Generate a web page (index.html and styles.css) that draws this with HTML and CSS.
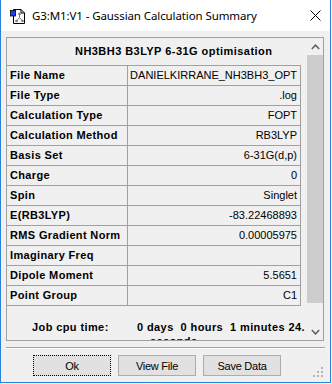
FILE: index.html
```html
<!DOCTYPE html>
<html lang="en">
<head>
    <meta charset="UTF-8">
    <meta name="viewport" content="width=device-width, initial-scale=1.0">
    <title>Gaussian Calculation Summary</title>
    <link rel="stylesheet" href="styles.css">
</head>
<body>

<div class="window">
    <div class="titlebar">
        <svg class="app-icon" width="16" height="16" viewBox="0 0 16 16">
            <path d="M3.5 1.5 H11 L14.5 5 V15.5 H3.5 Z" fill="#fff" stroke="#000" stroke-width="1"/>
            <path d="M11 1.5 V5 H14.5" fill="none" stroke="#000" stroke-width="1"/>
            <path d="M9.5 6 V9.5 M9.5 9.5 L6.5 13 M9.5 9.5 L12.5 13" stroke="#7a7a7a" stroke-width="1" fill="none"/>
            <circle cx="9.5" cy="6" r="1.3" fill="#7a7a7a"/>
            <circle cx="6.5" cy="13" r="1.3" fill="#7a7a7a"/>
            <circle cx="12.5" cy="13" r="1.3" fill="#7a7a7a"/>
            <rect x="0.5" y="2.5" width="5" height="5.5" fill="#1e3cff" stroke="#000" stroke-width="0.8"/>
        </svg>
        <span class="title">G3:M1:V1 - Gaussian Calculation Summary</span>
        <svg class="close" width="11" height="11" viewBox="0 0 11 11">
            <path d="M0.5 0.5 L10.5 10.5 M10.5 0.5 L0.5 10.5" stroke="#000" stroke-width="1"/>
        </svg>
    </div>

    <div class="client">
        <div class="panel">
            <div class="panel-body">
                <div class="heading">NH3BH3 B3LYP 6-31G optimisation</div>

                <div class="grid">
                    <div class="key">File Name</div><div class="val">DANIELKIRRANE_NH3BH3_OPT</div>
                    <div class="key">File Type</div><div class="val">.log</div>
                    <div class="key">Calculation Type</div><div class="val">FOPT</div>
                    <div class="key">Calculation Method</div><div class="val">RB3LYP</div>
                    <div class="key">Basis Set</div><div class="val">6-31G(d,p)</div>
                    <div class="key">Charge</div><div class="val">0</div>
                    <div class="key">Spin</div><div class="val">Singlet</div>
                    <div class="key">E(RB3LYP)</div><div class="val">-83.22468893</div>
                    <div class="key">RMS Gradient Norm</div><div class="val">0.00005975</div>
                    <div class="key">Imaginary Freq</div><div class="val"></div>
                    <div class="key">Dipole Moment</div><div class="val">5.5651</div>
                    <div class="key">Point Group</div><div class="val">C1</div>
                </div>

                <div class="cpu">
                    <div class="cpu-label">Job cpu time:</div>
                    <div class="cpu-value">
                        <div class="cpu-line">0 days&nbsp; 0 hours&nbsp; 1 minutes 24.</div>
                        <div class="cpu-line cpu-wrap">seconds</div>
                    </div>
                </div>
            </div>

            <div class="scrollbar">
                <div class="arrow">
                    <svg width="9" height="6" viewBox="0 0 9 6"><path d="M0.8 5 L4.5 1.2 L8.2 5" fill="none" stroke="#606060" stroke-width="1.5"/></svg>
                </div>
                <div class="thumb"></div>
                <div class="track"></div>
                <div class="arrow">
                    <svg width="9" height="6" viewBox="0 0 9 6"><path d="M0.8 1 L4.5 4.8 L8.2 1" fill="none" stroke="#606060" stroke-width="1.5"/></svg>
                </div>
            </div>
        </div>

        <div class="separator"></div>

        <div class="buttons">
            <button class="btn btn-default">Ok</button>
            <button class="btn">View File</button>
            <button class="btn">Save Data</button>
        </div>

        <!-- poignée de redimensionnement -->
        <svg class="grip" width="11" height="11" viewBox="0 0 11 11" fill="#b4b4b4">
            <rect x="8" y="0" width="2" height="2"/>
            <rect x="4" y="4" width="2" height="2"/>
            <rect x="8" y="4" width="2" height="2"/>
            <rect x="0" y="8" width="2" height="2"/>
            <rect x="4" y="8" width="2" height="2"/>
            <rect x="8" y="8" width="2" height="2"/>
        </svg>
    </div>
</div>

</body>
</html>
```

FILE: styles.css
```css
* {
    box-sizing: border-box;
}
body {
    margin: 0;
    background: #fff;
    font-family: "Liberation Sans", Arial, sans-serif;
    color: #000;
}
.window {
    width: 331px;
    height: 383px;
    border: 1px solid #2a83d8;
    border-top: none;
    display: flex;
    flex-direction: column;
    background: #fff;
}
.titlebar {
    height: 31px;
    display: flex;
    align-items: center;
    padding: 0 9px 0 9px;
    background: #fff;
}
.app-icon {
    display: block;
}
.title {
    margin-left: 6px;
    font-family: "Noto Sans", "Liberation Sans", sans-serif;
    font-size: 11.5px;
    letter-spacing: -0.1px;
}
.close {
    margin-left: auto;
    margin-right: 0;
    display: block;
}
.client {
    position: relative;
    flex: 1;
    background: #f0f0f0;
    padding-top: 6px;
}
.panel {
    margin: 0 6px 0 5px;
    height: 304px;
    border: 1px solid #a0a0a0;
    display: flex;
    background: #f0f0f0;
}
.panel-body {
    flex: 1;
    overflow: hidden;
}
.heading {
    height: 27px;
    line-height: 27px;
    padding-left: 68px;
    font-weight: bold;
    font-size: 11px;
    letter-spacing: 0.45px;
    white-space: nowrap;
}
.grid {
    display: grid;
    grid-template-columns: 121px 172px;
    width: 294px;
    border-top: 1px solid #a0a0a0;
    border-right: 1px solid #a0a0a0;
}
.key, .val {
    height: 20px;
    line-height: 19px;
    border-bottom: 1px solid #a0a0a0;
    font-size: 11px;
    white-space: nowrap;
    overflow: hidden;
}
.key {
    border-right: 1px solid #a0a0a0;
    padding-left: 3px;
    font-weight: bold;
    letter-spacing: 0.35px;
}
.val {
    text-align: right;
    padding-right: 3px;
}
.cpu {
    display: flex;
    padding: 14px 0 0 25px;
    font-size: 11px;
    font-weight: bold;
    letter-spacing: 0.4px;
    white-space: nowrap;
}
.cpu-label {
    width: 105px;
    line-height: 14px;
}
.cpu-line {
    line-height: 14px;
}
.cpu-wrap {
    padding-left: 13px;
}
.scrollbar {
    width: 17px;
    display: flex;
    flex-direction: column;
    background: #f0f0f0;
}
.arrow {
    height: 17px;
    display: flex;
    align-items: center;
    justify-content: center;
    padding-left: 1px;
}
.arrow svg {
    display: block;
}
.thumb {
    height: 248px;
    margin-left: 1px;
    background: #cdcdcd;
}
.track {
    flex: 1;
}
.separator {
    margin: 6px 5px 0 5px;
    border-top: 1px solid #a0a0a0;
    border-bottom: 1px solid #fff;
}
.buttons {
    display: flex;
    gap: 7px;
    margin: 6px 0 0 32px;
}
.btn {
    width: 78px;
    height: 21px;
    padding: 0;
    background: #e1e1e1;
    border: 1px solid #adadad;
    border-radius: 0;
    font-family: "Liberation Sans", Arial, sans-serif;
    font-size: 11px;
    letter-spacing: -0.25px;
    color: #000;
}
.btn-default {
    border: 1px dotted #000;
}
.grip {
    position: absolute;
    right: 6px;
    bottom: 4px;
}
```
